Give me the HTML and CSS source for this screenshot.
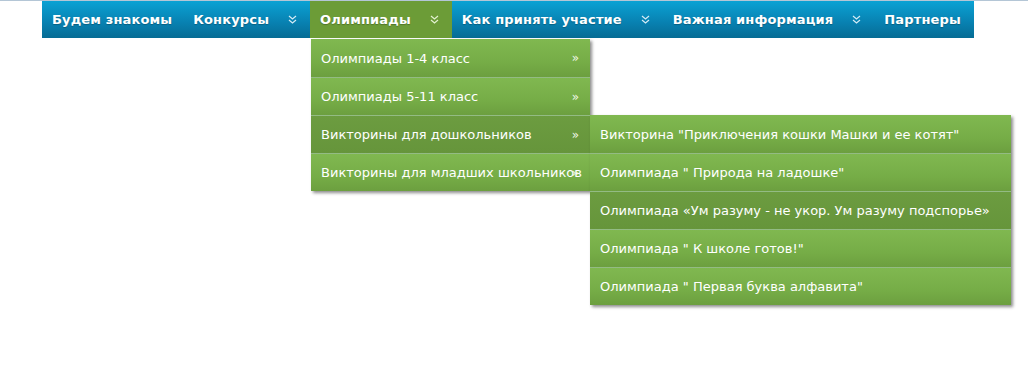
FILE: index.html
```html
<!DOCTYPE html>
<html lang="ru">
<head>
  <meta charset="UTF-8">
  <title>Олимпиады</title>
  <link rel="stylesheet" href="styles.css">
</head>
<body>

  <nav class="menu">
    <ul class="menu-bar">
      <li class="menu-item"><a href="#">Будем знакомы</a></li>
      <li class="menu-item has-sub"><a href="#">Конкурсы</a><span class="down"><svg width="9" height="9" viewBox="0 0 9 9"><path d="M1 1l3.5 3 3.5-3M1 5l3.5 3 3.5-3" fill="none" stroke="currentColor" stroke-width="1.2"/></svg></span></li>
      <li class="menu-item has-sub active">
        <a href="#">Олимпиады</a><span class="down"><svg width="9" height="9" viewBox="0 0 9 9"><path d="M1 1l3.5 3 3.5-3M1 5l3.5 3 3.5-3" fill="none" stroke="currentColor" stroke-width="1.2"/></svg></span>
        <ul class="dropdown">
          <li class="drop-item"><a href="#">Олимпиады 1-4 класс</a><span class="right">&raquo;</span></li>
          <li class="drop-item"><a href="#">Олимпиады 5-11 класс</a><span class="right">&raquo;</span></li>
          <li class="drop-item hover">
            <a href="#">Викторины для дошкольников</a><span class="right">&raquo;</span>
            <ul class="submenu">
              <li class="drop-item"><a href="#">Викторина "Приключения кошки Машки и ее котят"</a></li>
              <li class="drop-item"><a href="#">Олимпиада " Природа на ладошке"</a></li>
              <li class="drop-item hover"><a href="#">Олимпиада «Ум разуму - не укор. Ум разуму подспорье»</a></li>
              <li class="drop-item"><a href="#">Олимпиада " К школе готов!"</a></li>
              <li class="drop-item"><a href="#">Олимпиада " Первая буква алфавита"</a></li>
            </ul>
          </li>
          <li class="drop-item"><a href="#">Викторины для младших школьников</a><span class="right">&raquo;</span></li>
        </ul>
      </li>
      <li class="menu-item has-sub"><a href="#">Как принять участие</a><span class="down"><svg width="9" height="9" viewBox="0 0 9 9"><path d="M1 1l3.5 3 3.5-3M1 5l3.5 3 3.5-3" fill="none" stroke="currentColor" stroke-width="1.2"/></svg></span></li>
      <li class="menu-item has-sub"><a href="#">Важная информация</a><span class="down"><svg width="9" height="9" viewBox="0 0 9 9"><path d="M1 1l3.5 3 3.5-3M1 5l3.5 3 3.5-3" fill="none" stroke="currentColor" stroke-width="1.2"/></svg></span></li>
      <li class="menu-item"><a href="#">Партнеры</a></li>
    </ul>
  </nav>

</body>
</html>
```

FILE: styles.css
```css
* {
  box-sizing: border-box;
  margin: 0;
  padding: 0;
}

html,
body {
  height: 100%;
}

body {
  font-family: 'DejaVu Sans', sans-serif;
  background: #fff;
  border-top: 1px solid #b4c6d6;
}

ul {
  list-style: none;
}

a {
  color: #fff;
  text-decoration: none;
}

.menu {
  margin-left: 42px;
  width: 932px;
  min-height: 320px;
}

.menu-bar {
  display: flex;
  height: 37px;
  background: linear-gradient(#0aa2d4, #0880b0 60%, #066c94);
}

.menu-item {
  position: relative;
  flex-shrink: 0;
  display: flex;
  align-items: center;
  padding: 0 11px 0 10px;
  font-size: 13px;
  font-weight: bold;
  letter-spacing: 0.15px;
  white-space: nowrap;
  text-shadow: 0 1px 1px rgba(0,0,0,0.25);
}

.menu-item.has-sub {
  padding-right: 13px;
}

.menu-item .down {
  display: flex;
  margin-left: 19px;
  color: #d6ecf6;
}

.menu-item.active {
  background: #6c9c37;
}

.menu-item.active .down {
  color: #e4f2d2;
}

/* dropdown */
.dropdown {
  position: absolute;
  z-index: 10;
  top: 38px;
  left: 1px;
  width: 279px;
  box-shadow: 2px 2px 3px rgba(0,0,0,0.45);
  font-weight: normal;
  letter-spacing: 0;
  text-shadow: none;
}

.drop-item {
  position: relative;
  display: flex;
  align-items: center;
  height: 38px;
  padding: 0 10px;
  background: linear-gradient(#80b850, #76ad47 60%, #6c9f3f);
  border-top: 1px solid #93bb84;
  font-size: 13px;
  white-space: nowrap;
}

.drop-item:first-child {
  border-top: none;
}

.drop-item.hover {
  background: linear-gradient(#6c9c40, #66953b);
}

.drop-item .right {
  position: absolute;
  right: 11px;
  top: 12px;
  color: #eef6e4;
  font-size: 12px;
}

.submenu {
  position: absolute;
  z-index: 11;
  top: -1px;
  left: 279px;
  width: 421px;
  box-shadow: 2px 2px 3px rgba(0,0,0,0.45);
}
```
